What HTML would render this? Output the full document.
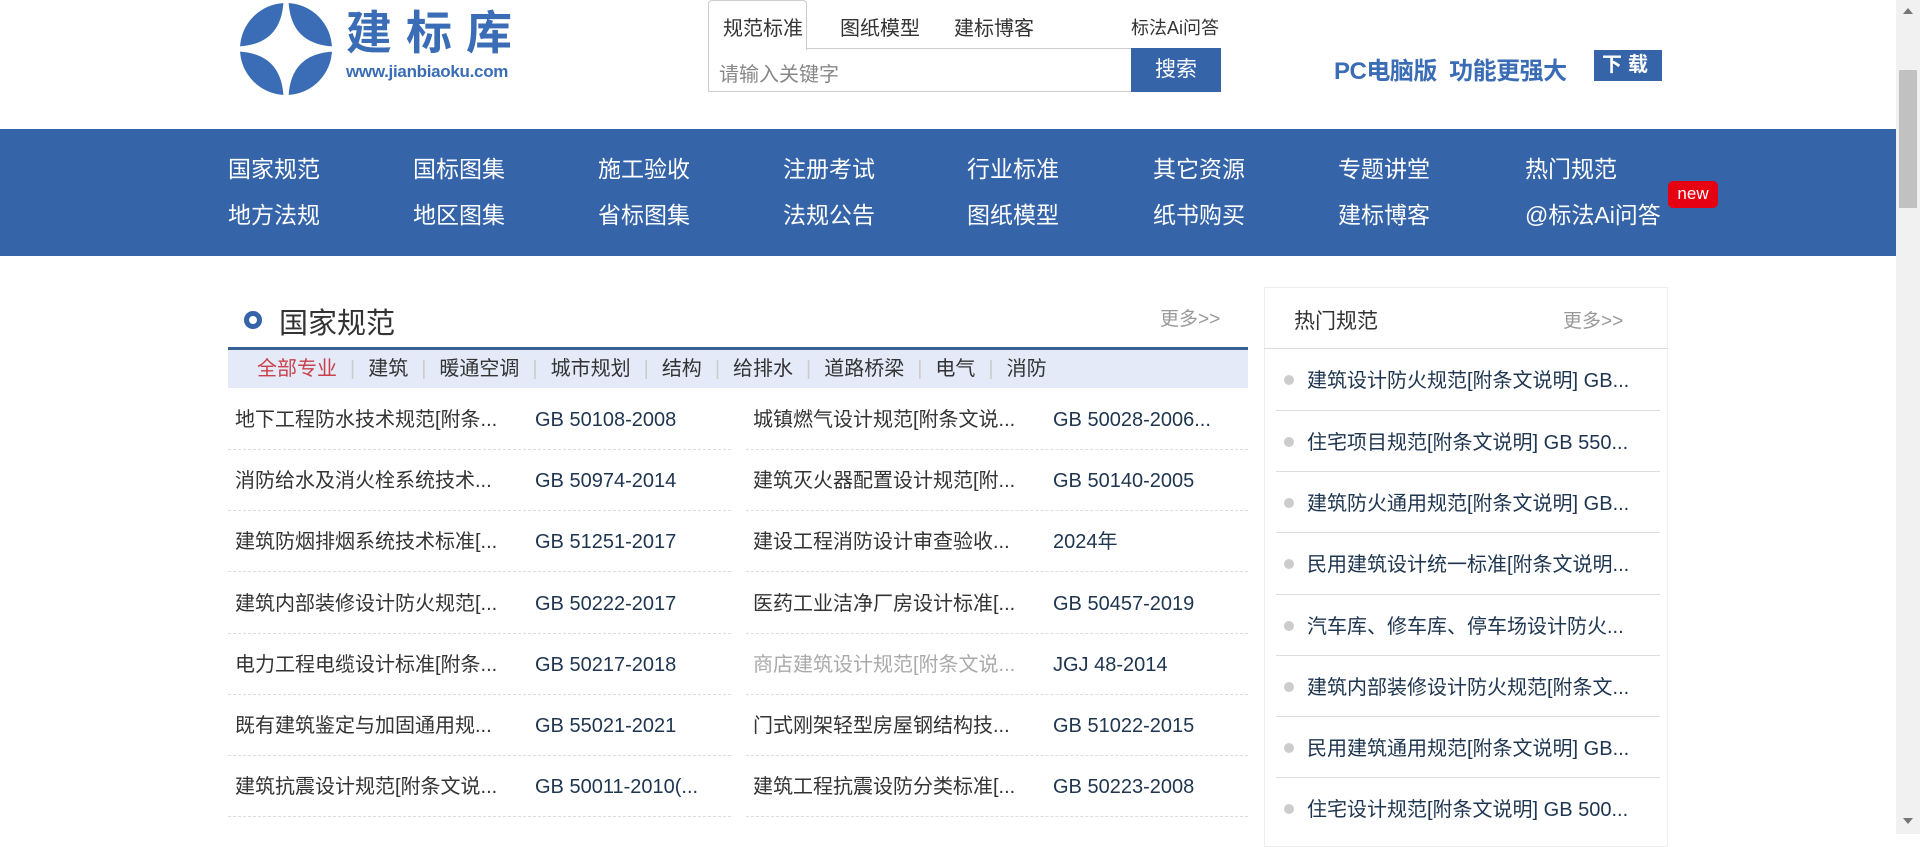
<!DOCTYPE html>
<html><head><meta charset="utf-8">
<style>
*{margin:0;padding:0;box-sizing:border-box}
body{width:1920px;height:834px;overflow:hidden;background:#fff;font-family:"Liberation Sans","Noto Sans CJK SC",sans-serif;position:relative;color:#333}
.a{position:absolute;white-space:nowrap}
.nav{position:absolute;left:0;top:129px;width:1896px;height:127px;background:#3564a9}
.nav span{position:absolute;color:#fff;font-size:23px;line-height:26px}
.row{position:absolute;height:61px;border-bottom:1px dashed #ddd;font-size:20px;line-height:28px}
.row .t{position:absolute;left:7px;top:17px;color:#333}
.row .c{position:absolute;left:307px;top:17px;color:#1e3550}
.hi{position:absolute;left:1276px;width:384px;height:61px;border-top:1px solid #ddd;font-size:20px}
.hi i{position:absolute;left:8px;top:26px;width:10px;height:10px;border-radius:50%;background:#ccc}
.hi b{position:absolute;left:31px;top:15px;font-weight:normal;color:#1e3550}
.flt .sep{color:#ccc;margin:0 13px}
</style></head><body>

<svg class="a" style="left:238px;top:1px" width="96" height="96" viewBox="0 0 96 96">
<circle cx="48" cy="48" r="46" fill="#3a6db5"/>
<path d="M48 0 Q50 46 96 48 Q50 50 48 96 Q46 50 0 48 Q46 46 48 0Z" fill="#fff" stroke="#fff" stroke-width="5" stroke-linejoin="round"/>
<circle cx="48" cy="48" r="7" fill="#fff"/>
</svg>
<div class="a" style="left:346px;top:7px;font-size:46px;color:#3a6db5;letter-spacing:14px;font-weight:bold;line-height:52px">建标库</div>
<div class="a" style="left:346px;top:62px;font-size:17px;color:#3a6db5;line-height:20px;font-weight:bold;letter-spacing:-0.3px">www.jianbiaoku.com</div>

<div class="a" style="left:708px;top:0;width:99px;height:50px;border:1px solid #ccc;border-bottom:none;border-radius:4px 4px 0 0;background:#fff;z-index:2"></div>
<div class="a" style="left:723px;top:12px;font-size:20px;color:#333;z-index:3">规范标准</div>
<div class="a" style="left:840px;top:12px;font-size:20px;color:#333">图纸模型</div>
<div class="a" style="left:954px;top:12px;font-size:20px;color:#333">建标博客</div>
<div class="a" style="left:1131px;top:14px;font-size:18px;color:#333">标法Ai问答</div>
<div class="a" style="left:708px;top:48px;width:423px;height:44px;border:1px solid #ccc;border-right:none"></div>
<div class="a" style="left:719px;top:58px;font-size:20px;color:#888">请输入关键字</div>
<div class="a" style="left:1131px;top:48px;width:90px;height:44px;background:#3564a9;color:#fff;font-size:21px;text-align:center;line-height:44px">搜索</div>

<div class="a" style="left:1334px;top:51px;font-size:24px;font-weight:bold;color:#3a6db5;letter-spacing:-0.5px">PC电脑版&nbsp; 功能更强大</div>
<div class="a" style="left:1594px;top:50px;width:68px;height:31px;background:#3564a9;color:#fff;font-size:20px;font-weight:bold;text-align:center;line-height:31px;letter-spacing:6px">下载</div>

<div class="nav">
<span style="left:228px;top:27px">国家规范</span><span style="left:228px;top:73px">地方法规</span>
<span style="left:413px;top:27px">国标图集</span><span style="left:413px;top:73px">地区图集</span>
<span style="left:598px;top:27px">施工验收</span><span style="left:598px;top:73px">省标图集</span>
<span style="left:783px;top:27px">注册考试</span><span style="left:783px;top:73px">法规公告</span>
<span style="left:967px;top:27px">行业标准</span><span style="left:967px;top:73px">图纸模型</span>
<span style="left:1153px;top:27px">其它资源</span><span style="left:1153px;top:73px">纸书购买</span>
<span style="left:1338px;top:27px">专题讲堂</span><span style="left:1338px;top:73px">建标博客</span>
<span style="left:1525px;top:27px">热门规范</span><span style="left:1525px;top:73px">@标法Ai问答</span>
<span style="left:1668px;top:52px;width:50px;height:27px;background:#e60012;border-radius:5px;font-size:17px;text-align:center;line-height:26px">new</span>
</div>

<div class="a" style="left:1896px;top:0;width:24px;height:834px;background:#f1f1f1"></div>
<div class="a" style="left:1899px;top:70px;width:18px;height:138px;background:#c1c1c1"></div>
<div class="a" style="left:1903px;top:8px;width:0;height:0;border-left:5px solid transparent;border-right:5px solid transparent;border-bottom:6px solid #777"></div>
<div class="a" style="left:1903px;top:818px;width:0;height:0;border-left:5px solid transparent;border-right:5px solid transparent;border-top:6px solid #777"></div>

<div class="a" style="left:244px;top:311px;width:18px;height:18px;border-radius:50%;border:5px solid #3564a9"></div>
<div class="a" style="left:279px;top:300px;font-size:29px;color:#333">国家规范</div>
<div class="a" style="left:1160px;top:304px;font-size:19px;color:#999">更多&gt;&gt;</div>
<div class="a" style="left:228px;top:347px;width:1020px;height:3px;background:#3a5f95"></div>
<div class="a flt" style="left:228px;top:350px;width:1020px;height:38px;background:#e5eaf8;font-size:20px;line-height:38px;padding-left:29px;color:#333"><span style="color:#c9414a">全部专业</span><span class="sep">|</span>建筑<span class="sep">|</span>暖通空调<span class="sep">|</span>城市规划<span class="sep">|</span>结构<span class="sep">|</span>给排水<span class="sep">|</span>道路桥梁<span class="sep">|</span>电气<span class="sep">|</span>消防</div>

<div class="row" style="left:228px;top:389px;width:503px"><span class="t">地下工程防水技术规范[附条...</span><span class="c">GB 50108-2008</span></div>
<div class="row" style="left:228px;top:450px;width:503px"><span class="t">消防给水及消火栓系统技术...</span><span class="c">GB 50974-2014</span></div>
<div class="row" style="left:228px;top:511px;width:503px"><span class="t">建筑防烟排烟系统技术标准[...</span><span class="c">GB 51251-2017</span></div>
<div class="row" style="left:228px;top:573px;width:503px"><span class="t">建筑内部装修设计防火规范[...</span><span class="c">GB 50222-2017</span></div>
<div class="row" style="left:228px;top:634px;width:503px"><span class="t">电力工程电缆设计标准[附条...</span><span class="c">GB 50217-2018</span></div>
<div class="row" style="left:228px;top:695px;width:503px"><span class="t">既有建筑鉴定与加固通用规...</span><span class="c">GB 55021-2021</span></div>
<div class="row" style="left:228px;top:756px;width:503px"><span class="t">建筑抗震设计规范[附条文说...</span><span class="c">GB 50011-2010(...</span></div>

<div class="row" style="left:746px;top:389px;width:502px"><span class="t">城镇燃气设计规范[附条文说...</span><span class="c">GB 50028-2006...</span></div>
<div class="row" style="left:746px;top:450px;width:502px"><span class="t">建筑灭火器配置设计规范[附...</span><span class="c">GB 50140-2005</span></div>
<div class="row" style="left:746px;top:511px;width:502px"><span class="t">建设工程消防设计审查验收...</span><span class="c">2024年</span></div>
<div class="row" style="left:746px;top:573px;width:502px"><span class="t">医药工业洁净厂房设计标准[...</span><span class="c">GB 50457-2019</span></div>
<div class="row" style="left:746px;top:634px;width:502px"><span class="t" style="color:#aaa">商店建筑设计规范[附条文说...</span><span class="c">JGJ 48-2014</span></div>
<div class="row" style="left:746px;top:695px;width:502px"><span class="t">门式刚架轻型房屋钢结构技...</span><span class="c">GB 51022-2015</span></div>
<div class="row" style="left:746px;top:756px;width:502px"><span class="t">建筑工程抗震设防分类标准[...</span><span class="c">GB 50223-2008</span></div>

<div class="a" style="left:1264px;top:287px;width:404px;height:560px;border:1px solid #eee"></div>
<div class="a" style="left:1294px;top:305px;font-size:21px;color:#333">热门规范</div>
<div class="a" style="left:1563px;top:306px;font-size:19px;color:#999">更多&gt;&gt;</div>
<div class="a" style="left:1264px;top:348px;width:404px;height:1px;background:#ddd"></div>
<div class="hi" style="top:349px;border-top:none"><i></i><b>建筑设计防火规范[附条文说明] GB...</b></div>
<div class="hi" style="top:410px"><i></i><b>住宅项目规范[附条文说明] GB 550...</b></div>
<div class="hi" style="top:471px"><i></i><b>建筑防火通用规范[附条文说明] GB...</b></div>
<div class="hi" style="top:532px"><i></i><b>民用建筑设计统一标准[附条文说明...</b></div>
<div class="hi" style="top:594px"><i></i><b>汽车库、修车库、停车场设计防火...</b></div>
<div class="hi" style="top:655px"><i></i><b>建筑内部装修设计防火规范[附条文...</b></div>
<div class="hi" style="top:716px"><i></i><b>民用建筑通用规范[附条文说明] GB...</b></div>
<div class="hi" style="top:777px"><i></i><b>住宅设计规范[附条文说明] GB 500...</b></div>
</body></html>
